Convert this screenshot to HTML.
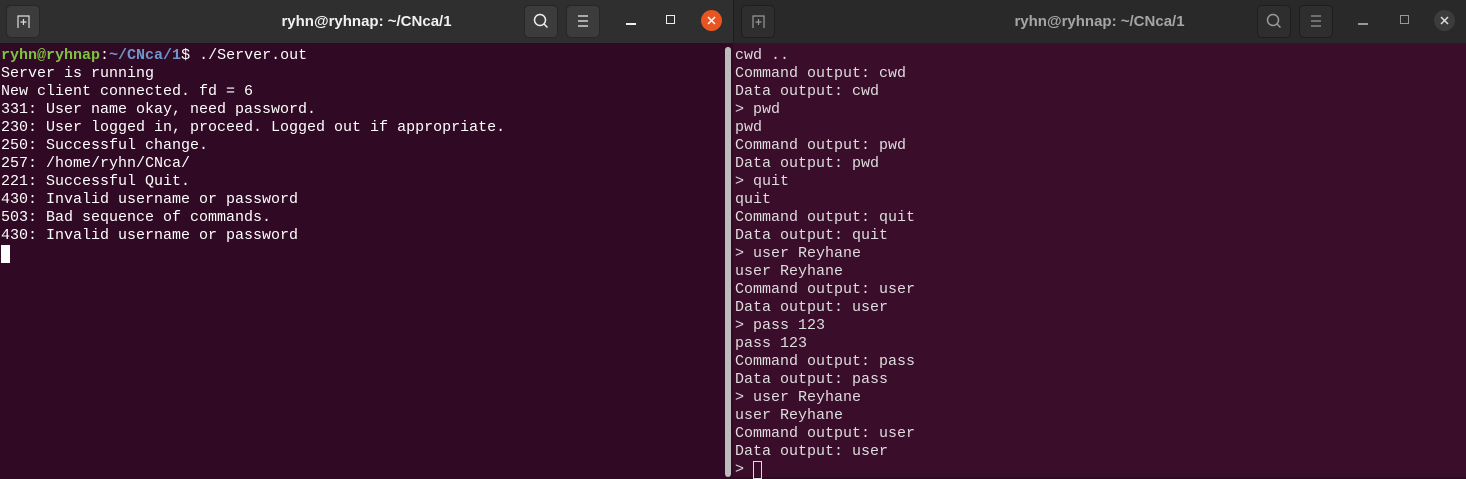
<!DOCTYPE html>
<html><head><meta charset="utf-8"><style>
*{margin:0;padding:0;box-sizing:border-box}
body{width:1466px;height:477px;overflow:hidden;position:relative;background:#300a24;font-family:"Liberation Mono","DejaVu Sans Mono",monospace}
.hdr{position:absolute;top:0;height:43px}
.t{position:absolute;top:0;height:43px;line-height:43px;font-family:"Liberation Sans",sans-serif;font-weight:bold;font-size:15px}
.btn{position:absolute;top:5px;width:34px;height:33px;border-radius:5px}
.term{position:absolute;top:43px;bottom:0;font-size:15px;line-height:18px;white-space:pre;color:#fff;padding-top:4px}
</style></head><body>
<div class="hdr" style="left:0;width:733px;background:#2f2f2f"></div>
<div class="btn" style="left:6px;background:#3c3c3c;border:1px solid #262626"></div>
<svg style="position:absolute;left:16px;top:13px" width="16" height="16" viewBox="0 0 16 16" fill="none" stroke="#ddd" stroke-width="1.2"><path d="M2 15V3h11v12"/><path d="M7.5 6v6M4.5 9h6"/></svg>
<div class="t" style="left:0;width:733px;text-align:center;color:#f0f0f0">ryhn@ryhnap: ~/CNca/1</div>
<div class="btn" style="left:524px;background:#3c3c3c;border:1px solid #262626"></div>
<svg style="position:absolute;left:532px;top:12px" width="18" height="18" viewBox="0 0 18 18" fill="none" stroke="#eee" stroke-width="1.5"><circle cx="8" cy="8" r="5.5"/><path d="M12 12l3.5 3.5"/></svg>
<div class="btn" style="left:566px;background:#3c3c3c;border:1px solid #262626"></div>
<svg style="position:absolute;left:576px;top:14px" width="14" height="14" viewBox="0 0 14 14" stroke="#eee" stroke-width="1.3"><path d="M2 2h10M2 7h10M2 12h10"/></svg>
<div style="position:absolute;left:626px;top:23px;width:10px;height:1.5px;background:#eee"></div>
<div style="position:absolute;left:666px;top:15px;width:9px;height:9px;border:1.5px solid #eee"></div>
<div style="position:absolute;left:701px;top:10px;width:21px;height:21px;border-radius:50%;background:#e95420"></div>
<svg style="position:absolute;left:706px;top:15px" width="11" height="11" viewBox="0 0 11 11" stroke="#fff" stroke-width="1.5"><path d="M2 2l7 7M9 2l-7 7"/></svg>
<div class="term" style="left:0;width:733px;background:#300a24;padding-left:1px"><span style="color:#7fc241;font-weight:bold">ryhn@ryhnap</span>:<span style="color:#6f96cc;font-weight:bold">~/CNca/1</span>$ ./Server.out
Server is running
New client connected. fd = 6
331: User name okay, need password.
230: User logged in, proceed. Logged out if appropriate.
250: Successful change.
257: /home/ryhn/CNca/
221: Successful Quit.
430: Invalid username or password
503: Bad sequence of commands.
430: Invalid username or password
<span style="background:#fff;display:inline-block;width:9px;height:18px;vertical-align:top"></span></div>
<div style="position:absolute;left:725px;top:47px;width:6px;height:430px;border-radius:3px;background:#bdbdbd"></div>
<div class="hdr" style="left:733px;width:733px;background:#292929;border-left:1px solid #1e1e1e"></div>
<div class="btn" style="left:741px;background:#2e2e2e;border:1px solid #1e1e1e"></div>
<svg style="position:absolute;left:751px;top:13px" width="16" height="16" viewBox="0 0 16 16" fill="none" stroke="#999" stroke-width="1.2"><path d="M2 15V3h11v12"/><path d="M7.5 6v6M4.5 9h6"/></svg>
<div class="t" style="left:733px;width:733px;text-align:center;color:#a5a5a5">ryhn@ryhnap: ~/CNca/1</div>
<div class="btn" style="left:1257px;background:#2e2e2e;border:1px solid #1e1e1e"></div>
<svg style="position:absolute;left:1265px;top:12px" width="18" height="18" viewBox="0 0 18 18" fill="none" stroke="#999" stroke-width="1.5"><circle cx="8" cy="8" r="5.5"/><path d="M12 12l3.5 3.5"/></svg>
<div class="btn" style="left:1299px;background:#2e2e2e;border:1px solid #1e1e1e"></div>
<svg style="position:absolute;left:1309px;top:14px" width="14" height="14" viewBox="0 0 14 14" stroke="#999" stroke-width="1.3"><path d="M2 2h10M2 7h10M2 12h10"/></svg>
<div style="position:absolute;left:1358px;top:23px;width:10px;height:1.5px;background:#999"></div>
<div style="position:absolute;left:1400px;top:15px;width:9px;height:9px;border:1.5px solid #999"></div>
<div style="position:absolute;left:1434px;top:10px;width:21px;height:21px;border-radius:50%;background:#3c3c3c"></div>
<svg style="position:absolute;left:1439px;top:15px" width="11" height="11" viewBox="0 0 11 11" stroke="#ddd" stroke-width="1.5"><path d="M2 2l7 7M9 2l-7 7"/></svg>
<div class="term" style="left:733px;width:733px;background:#3a0d2b;padding-left:2px;color:#ddd">cwd ..
Command output: cwd
Data output: cwd
&gt; pwd
pwd
Command output: pwd
Data output: pwd
&gt; quit
quit
Command output: quit
Data output: quit
&gt; user Reyhane
user Reyhane
Command output: user
Data output: user
&gt; pass 123
pass 123
Command output: pass
Data output: pass
&gt; user Reyhane
user Reyhane
Command output: user
Data output: user
&gt; <span style="border:1px solid #ddd;display:inline-block;width:9px;height:18px;vertical-align:top"></span></div>
<div style="position:absolute;left:725px;top:47px;width:6px;height:428px;border-radius:3px;background:#bdbdbd"></div>
</body></html>
